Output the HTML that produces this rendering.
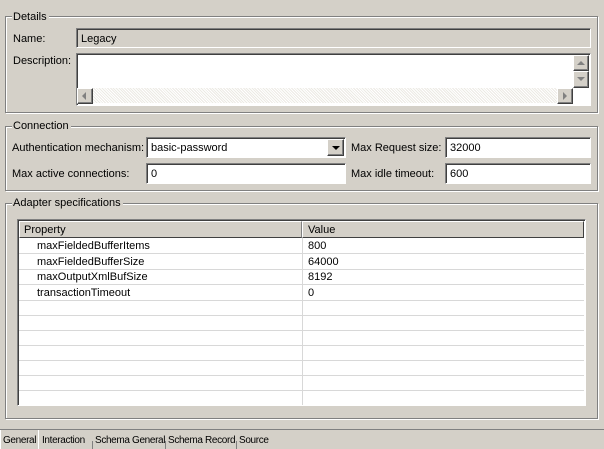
<!DOCTYPE html>
<html><head><style>
*{margin:0;padding:0;box-sizing:border-box}
body{width:604px;height:449px;background:#d4d0c8;font-family:"Liberation Sans",Tahoma,sans-serif;font-size:11px;color:#000;position:relative;overflow:hidden}
.a{position:absolute;white-space:nowrap}
.grp{position:absolute;border:1px solid #808080;box-shadow:1px 1px 0 #fff inset,1px 1px 0 #fff}
.lg{position:absolute;background:#d4d0c8;padding:0 2px 0 1px;line-height:12px}
.fld{position:absolute;background:#fff;border-top:1px solid #808080;border-left:1px solid #808080;border-right:1px solid #fff;border-bottom:1px solid #fff;box-shadow:inset 1px 1px 0 #404040;padding:4px 4px 2px;line-height:12px}
.btn{position:absolute;background:#d4d0c8;border-top:1px solid #fff;border-left:1px solid #fff;border-right:1px solid #404040;border-bottom:1px solid #404040;box-shadow:inset -1px -1px 0 #808080}
.hatch{position:absolute;background-color:#eceae4;background-image:repeating-linear-gradient(45deg,#fff 0 1px,transparent 1px 2px)}
.row{position:absolute;left:19px;width:565px;height:16px;border-bottom:1px solid #d8d8d8;line-height:17px}
.row span{position:absolute}
.tab{position:absolute;top:432px;line-height:17px;font-size:10px;letter-spacing:-0.35px}
.sep{position:absolute;width:1px;background:#808080}
</style></head><body>

<div class="grp" style="left:5px;top:16px;width:593px;height:97px"></div>
<div class="lg a" style="left:12px;top:11px">Details</div>
<div class="a" style="left:13px;top:33px">Name:</div>
<div class="fld" style="left:76px;top:28px;width:515px;height:20px;background:#d4d0c8;box-shadow:inset 0 1px 0 #404040,inset 1px 0 0 #404040">Legacy</div>
<div class="a" style="left:13px;top:55px">Description:</div>
<div class="fld" style="left:76px;top:53px;width:515px;height:53px"></div>
<div class="hatch" style="left:78px;top:88px;width:480px;height:15px"></div>
<div class="btn" style="left:77px;top:88px;width:16px;height:16px"><div class="a" style="left:4px;top:3px;width:0;height:0;border:4px solid transparent;border-right:4px solid #808080;border-left:0"></div></div>
<div class="btn" style="left:557px;top:88px;width:16px;height:16px"><div class="a" style="left:5px;top:3px;width:0;height:0;border:4px solid transparent;border-left:4px solid #808080;border-right:0"></div></div>
<div class="btn" style="left:573px;top:55px;width:16px;height:16px"><div class="a" style="left:3px;top:5px;width:0;height:0;border:4px solid transparent;border-bottom:4px solid #808080;border-top:0"></div></div>
<div class="btn" style="left:573px;top:71px;width:16px;height:17px"><div class="a" style="left:3px;top:5px;width:0;height:0;border:4px solid transparent;border-top:4px solid #808080;border-bottom:0"></div></div>

<div class="grp" style="left:5px;top:126px;width:593px;height:65px"></div>
<div class="lg a" style="left:12px;top:120px">Connection</div>
<div class="a" style="left:12px;top:142px">Authentication mechanism:</div>
<div class="fld" style="left:146px;top:137px;width:200px;height:21px">basic-password</div>
<div class="btn" style="left:327px;top:139px;width:17px;height:17px"><div class="a" style="left:4px;top:6px;width:0;height:0;border:4px solid transparent;border-top:4px solid #000;border-bottom:0"></div></div>
<div class="a" style="left:351px;top:142px">Max Request size:</div>
<div class="fld" style="left:445px;top:137px;width:146px;height:21px">32000</div>
<div class="a" style="left:12px;top:168px">Max active connections:</div>
<div class="fld" style="left:146px;top:163px;width:200px;height:21px">0</div>
<div class="a" style="left:351px;top:168px">Max idle timeout:</div>
<div class="fld" style="left:445px;top:163px;width:146px;height:21px">600</div>

<div class="grp" style="left:5px;top:203px;width:593px;height:216px"></div>
<div class="lg a" style="left:12px;top:197px">Adapter specifications</div>
<div class="a" style="left:17px;top:219px;width:569px;height:187px;background:#fff;border-top:1px solid #808080;border-left:1px solid #808080;border-right:1px solid #fff;border-bottom:1px solid #fff;box-shadow:inset 1px 1px 0 #404040"></div>
<div class="a" style="left:19px;top:221px;width:283px;height:17px;border-top:1px solid #fff;border-left:1px solid #fff;border-right:1px solid #808080;border-bottom:1px solid #404040;background:#d4d0c8;padding-left:4px;line-height:16px">Property</div>
<div class="a" style="left:302px;top:221px;width:282px;height:17px;border-top:1px solid #fff;border-left:1px solid #fff;border-right:1px solid #404040;border-bottom:1px solid #404040;background:#d4d0c8;padding-left:5px;line-height:16px">Value</div>
<div class="a" style="left:302px;top:238px;width:1px;height:167px;background:#d8d8d8"></div>
<div class="row" style="top:238px"><span style="left:18px">maxFieldedBufferItems</span><span style="left:289px">800</span></div>
<div class="row" style="top:254px"><span style="left:18px">maxFieldedBufferSize</span><span style="left:289px">64000</span></div>
<div class="row" style="top:269px"><span style="left:18px">maxOutputXmlBufSize</span><span style="left:289px">8192</span></div>
<div class="row" style="top:285px"><span style="left:18px">transactionTimeout</span><span style="left:289px">0</span></div>
<div class="row" style="top:300px"></div>
<div class="row" style="top:315px"></div>
<div class="row" style="top:330px"></div>
<div class="row" style="top:345px"></div>
<div class="row" style="top:360px"></div>
<div class="row" style="top:375px"></div>
<div class="row" style="top:390px;border-bottom:none"></div>

<div class="a" style="left:0;top:429px;width:604px;height:1px;background:#808080"></div>
<div class="a" style="left:0;top:430px;width:39px;height:19px;background:#d4d0c8;border-right:1px solid #fff;border-left:1px solid #fff"></div>
<div class="tab" style="left:3px">General</div>
<div class="tab" style="left:42px">Interaction</div>
<div class="sep" style="left:92px;top:441px;height:8px"></div>
<div class="tab" style="left:95px">Schema General</div>
<div class="sep" style="left:165px;top:441px;height:8px"></div>
<div class="tab" style="left:168px">Schema Record</div>
<div class="sep" style="left:236px;top:441px;height:8px"></div>
<div class="tab" style="left:239px">Source</div>
</body></html>
